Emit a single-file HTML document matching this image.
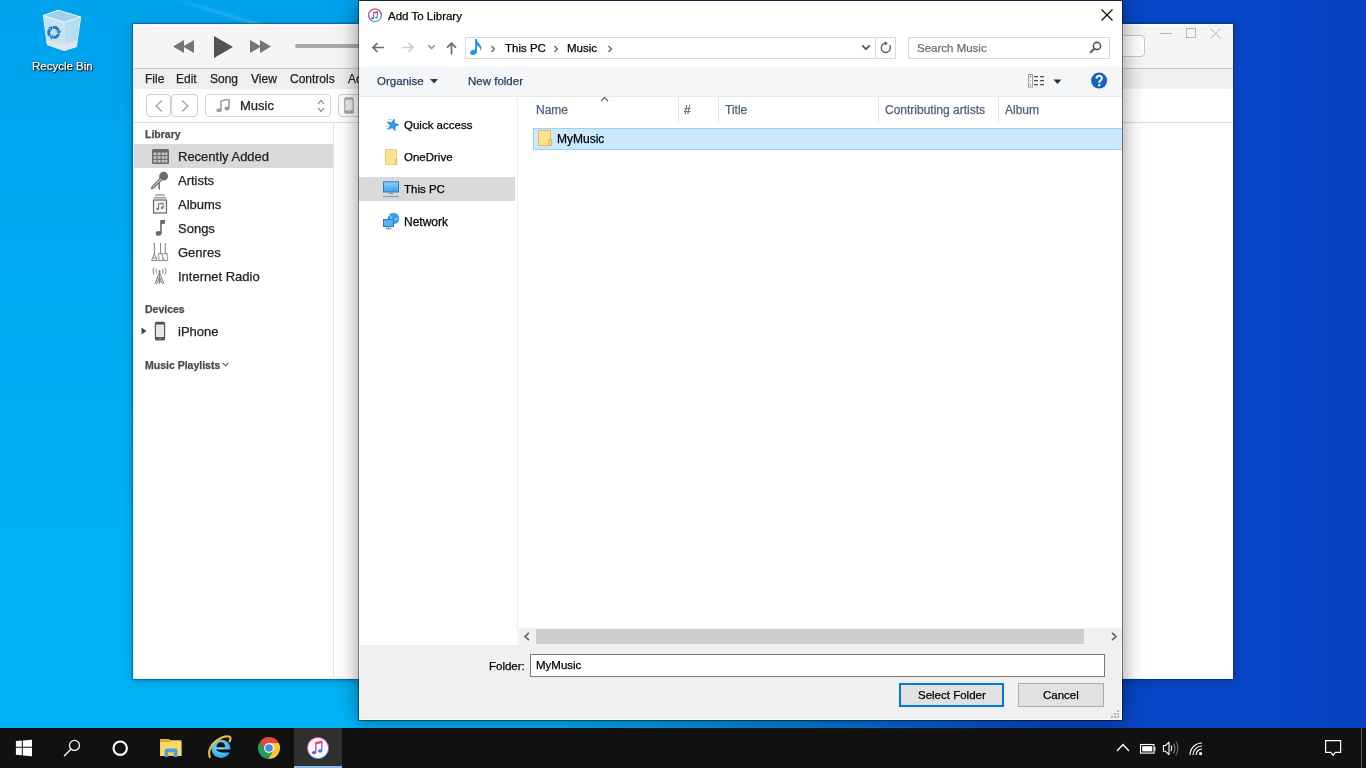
<!DOCTYPE html>
<html><head><meta charset="utf-8">
<style>
*{box-sizing:border-box;margin:0;padding:0}
html,body{width:1366px;height:768px;overflow:hidden;font-family:"Liberation Sans",sans-serif;}
body{position:relative;background:#0a4cc6;}
.a{position:absolute}
#bg{left:0;top:0;width:1366px;height:728px;background:linear-gradient(90deg,rgba(8,70,200,0) 0px,rgba(8,70,200,0) 560px,rgba(8,70,200,.5) 820px,rgba(8,70,200,1) 1060px,#0846c8 1250px,#0640c0 1366px),linear-gradient(180deg,#00a2ec 0px,#00a9f1 250px,#00b0f5 500px,#00b4f7 728px);}
.t{position:absolute;white-space:nowrap;line-height:1;will-change:transform;-webkit-text-stroke:0.25px currentColor}
/* itunes */
#it{left:133px;top:24px;width:1100px;height:655px;background:#fff;box-shadow:0 0 1px 1px rgba(0,40,80,.35),0 2px 10px rgba(0,0,0,.25);}
/* dialog */
#dlg{left:358px;top:0;width:765px;height:721px;background:transparent;border:1px solid rgba(0,0,0,.56);border-top-color:#132c45;box-shadow:0 1px 20px rgba(0,0,0,.42);}
#tb{left:0;top:728px;width:1366px;height:40px;background:#111;}
</style></head>
<body>
<div id="bg" class="a"></div>
<div class="a" style="left:150px;top:-10px;width:260px;height:3px;background:linear-gradient(90deg,rgba(255,255,255,0),rgba(160,230,255,.35) 50%,rgba(255,255,255,0));transform:rotate(17deg);transform-origin:0 0;filter:blur(1px)"></div>

<!-- Recycle bin -->
<svg class="a" style="left:40px;top:8px" width="45" height="46" viewBox="40 8 45 46">
<path d="M43.3 15.4 L58.2 10.2 L80.7 17 L76.5 46.7 L64.1 50.6 L47.2 44.7 Z" fill="#c6e2f2"/>
<path d="M64.1 22.3 L80.7 17 L76.5 46.7 L64.1 50.6 Z" fill="#b6dcf0"/>
<path d="M43.3 15.4 L58.2 10.2 L80.7 17 L64.1 22.3 Z" fill="#9fd0ec"/>
<path d="M45.9 40.5 L64.1 44 L77.3 40.8 L76.5 46.7 L64.1 50.6 L47.2 44.7 Z" fill="#dfe5e9"/>
<path d="M43.3 15.4 L58.2 10.2 L80.7 17 L64.1 22.3 Z" fill="none" stroke="#e4f6ff" stroke-width="1.1" stroke-linejoin="round"/>
<path d="M43.3 15.4 L47.2 44.7 L64.1 50.6 L76.5 46.7 L80.7 17" fill="none" stroke="#d6effc" stroke-width=".9"/>
<path d="M64.1 22.3 V50.6" stroke="#d8f0fc" stroke-width=".7"/>
<path d="M52.93 27.48 A5.0 5.0 0 0 1 58.44 30.53" fill="none" stroke="#1a78d2" stroke-width="2.8"/><path d="M59.49 34.10 L61.11 30.31 L56.11 31.74 Z" fill="#1a78d2"/><path d="M58.50 34.11 A5.0 5.0 0 0 1 53.10 37.35" fill="none" stroke="#1a78d2" stroke-width="2.8"/><path d="M49.49 36.48 L51.96 39.77 L53.22 34.73 Z" fill="#1a78d2"/><path d="M49.97 35.61 A5.0 5.0 0 0 1 49.86 29.32" fill="none" stroke="#1a78d2" stroke-width="2.8"/><path d="M52.43 26.62 L48.33 27.12 L52.07 30.73 Z" fill="#1a78d2"/>
</svg>
<div class="t" style="left:32px;top:61px;font-size:11.5px;color:#fff;text-shadow:0 0 1px #000,1px 1px 1px #000,0 1px 2px rgba(0,0,0,.8)">Recycle Bin</div>

<!-- iTunes window -->
<div id="it" class="a">
 <div class="a" style="left:0;top:0;width:1100px;height:44px;background:#f5f5f5;border-top:1px solid #f8feff"></div>
 <div class="a" style="left:0;top:44px;width:1100px;height:1px;background:#cbcbcb"></div>
 <div class="a" style="left:0;top:45px;width:1100px;height:20px;background:#efefef"></div>
 <div class="a" style="left:0;top:65px;width:1100px;height:33px;background:#fff"></div>
 <div class="a" style="left:0;top:98px;width:1100px;height:1px;background:#dedede"></div>
 <div class="a" style="left:200px;top:99px;width:1px;height:556px;background:#e3e3e3"></div>
 <!-- transport -->
 <svg class="a" style="left:40px;top:15.6px" width="22" height="14" viewBox="0 0 22 14"><path d="M0 6.5 L11 0 V13 Z M10 6.5 L21 0 V13 Z" fill="#757575"/></svg>
 <svg class="a" style="left:81px;top:12px" width="20" height="22" viewBox="0 0 20 22"><path d="M0 0 L19 11 L0 22 Z" fill="#525252"/></svg>
 <svg class="a" style="left:117px;top:15.6px" width="22" height="14" viewBox="0 0 22 14"><path d="M0 0 L11 6.5 L0 13 Z M10 0 L21 6.5 L10 13 Z" fill="#757575"/></svg>
 <div class="a" style="left:162px;top:20px;width:80px;height:4px;border-radius:2px;background:#a9a9a9"></div>
 <!-- search box -->
 <div class="a" style="left:900px;top:11px;width:112px;height:22px;border:1px solid #c9c9c9;border-radius:4px;background:#fff"></div>
 <!-- window controls -->
 <div class="a" style="left:1027px;top:9px;width:12px;height:1px;background:#b6b6b6"></div>
 <div class="a" style="left:1053px;top:4px;width:10px;height:10px;border:1px solid #b6b6b6"></div>
 <svg class="a" style="left:1077px;top:4px" width="11" height="11" viewBox="0 0 11 11"><path d="M0.5 0.5 L10.5 10.5 M10.5 0.5 L0.5 10.5" stroke="#b6b6b6" stroke-width="1"/></svg>
 <!-- menu -->
 <div class="t" style="left:12px;top:49px;font-size:12px;color:#222">File</div>
 <div class="t" style="left:43px;top:49px;font-size:12px;color:#222">Edit</div>
 <div class="t" style="left:77px;top:49px;font-size:12px;color:#222">Song</div>
 <div class="t" style="left:118px;top:49px;font-size:12px;color:#222">View</div>
 <div class="t" style="left:157px;top:49px;font-size:12px;color:#222">Controls</div>
 <div class="t" style="left:215px;top:49px;font-size:12px;color:#222">Account</div>
 <!-- nav -->
 <div class="a" style="left:13px;top:70px;width:25px;height:23px;border:1px solid #cfcfcf;border-radius:4px;background:#fff"></div>
 <div class="a" style="left:38px;top:70px;width:27px;height:23px;border:1px solid #cfcfcf;border-radius:4px;background:#fff"></div>
 <svg class="a" style="left:21px;top:76px" width="10" height="12" viewBox="0 0 10 12"><path d="M8 0.5 L2 6 L8 11.5" fill="none" stroke="#9a9a9a" stroke-width="1.1"/></svg>
 <svg class="a" style="left:47px;top:76px" width="10" height="12" viewBox="0 0 10 12"><path d="M2 0.5 L8 6 L2 11.5" fill="none" stroke="#9a9a9a" stroke-width="1.1"/></svg>
 <div class="a" style="left:72px;top:70px;width:126px;height:23px;border:1px solid #d6d6d6;border-radius:4px;background:#fff"></div>
 <svg class="a" style="left:83px;top:75px" width="14" height="14" viewBox="0 0 14 14"><path d="M5 11 V2 L13 0 V9" fill="none" stroke="#9d9d9d" stroke-width="1.6"/><ellipse cx="3" cy="11.3" rx="2.6" ry="2" fill="#9d9d9d"/><ellipse cx="11" cy="9.5" rx="2.6" ry="2" fill="#9d9d9d"/></svg>
 <div class="t" style="left:107px;top:75px;font-size:13px;color:#222">Music</div>
 <svg class="a" style="left:184px;top:75px" width="8" height="14" viewBox="0 0 8 14"><path d="M1 5 L4 1.5 L7 5 M1 9 L4 12.5 L7 9" fill="none" stroke="#777" stroke-width="1.1"/></svg>
 <div class="a" style="left:205px;top:70px;width:30px;height:23px;border:1px solid #cfcfcf;border-radius:4px;background:#fff"></div>
 <div class="a" style="left:0;top:0;width:1px;height:655px;background:#dcf8ff"></div>
 <div class="a" style="left:0;top:654px;width:1100px;height:1px;background:#e4f8ff"></div>
 <!-- sidebar -->
 <div class="t" style="left:12px;top:105px;font-size:10.5px;font-weight:bold;color:#4a4a4a">Library</div>
 <div class="a" style="left:1px;top:120px;width:199px;height:24px;background:#d9d9d9"></div>
 <div class="t" style="left:45px;top:126px;font-size:13px;color:#222">Recently Added</div>
 <div class="t" style="left:45px;top:150px;font-size:13px;color:#222">Artists</div>
 <div class="t" style="left:45px;top:174px;font-size:13px;color:#222">Albums</div>
 <div class="t" style="left:45px;top:198px;font-size:13px;color:#222">Songs</div>
 <div class="t" style="left:45px;top:222px;font-size:13px;color:#222">Genres</div>
 <div class="t" style="left:45px;top:246px;font-size:13px;color:#222">Internet Radio</div>
 <div class="t" style="left:12px;top:280px;font-size:10.5px;font-weight:bold;color:#4a4a4a">Devices</div>
 <div class="t" style="left:45px;top:301px;font-size:13px;color:#222">iPhone</div>
 <div class="t" style="left:12px;top:336px;font-size:10.5px;font-weight:bold;color:#4a4a4a">Music Playlists</div>
</div>


<!-- iTunes sidebar icons -->
<svg class="a" style="left:151px;top:148px" width="19" height="17" viewBox="0 0 19 17"><rect x="1" y="1" width="17" height="15" rx="1.5" fill="#6a6a6a"/><g fill="#c2c2c2"><rect x="2.5" y="4.5" width="3" height="2.6"/><rect x="6.5" y="4.5" width="3" height="2.6"/><rect x="10.5" y="4.5" width="3" height="2.6"/><rect x="14" y="4.5" width="2.5" height="2.6"/><rect x="2.5" y="8.2" width="3" height="2.6"/><rect x="6.5" y="8.2" width="3" height="2.6"/><rect x="10.5" y="8.2" width="3" height="2.6"/><rect x="14" y="8.2" width="2.5" height="2.6"/><rect x="2.5" y="11.9" width="3" height="2.6"/><rect x="6.5" y="11.9" width="3" height="2.6"/><rect x="10.5" y="11.9" width="3" height="2.6"/><rect x="14" y="11.9" width="2.5" height="2.6"/></g></svg>
<svg class="a" style="left:150px;top:171px" width="19" height="19" viewBox="0 0 19 19"><circle cx="13.6" cy="5.2" r="4.4" fill="#6a6a6a"/><path d="M10.2 7.2 L2.2 15.6 L1.4 17.8 L3.6 17 L11.8 8.8" fill="#cfcfcf" stroke="#6a6a6a" stroke-width="1.1" stroke-linejoin="round"/><path d="M9.2 12 V18.5" stroke="#6a6a6a" stroke-width="1.5"/></svg>
<svg class="a" style="left:152px;top:194px" width="16" height="20" viewBox="0 0 16 20"><path d="M3 1 H13 M2 3.8 H14" stroke="#6a6a6a" stroke-width="1"/><rect x="1.5" y="6" width="13" height="13" fill="#f0f0f0" stroke="#6a6a6a" stroke-width="1.2"/><path d="M6.5 15 V10 L11 9 V14" fill="none" stroke="#6a6a6a" stroke-width="1"/><ellipse cx="5.6" cy="15.1" rx="1.3" ry="1" fill="#6a6a6a"/><ellipse cx="10.1" cy="14.1" rx="1.3" ry="1" fill="#6a6a6a"/></svg>
<svg class="a" style="left:155px;top:219px" width="11" height="18" viewBox="0 0 11 18"><path d="M6 1 V14" stroke="#6a6a6a" stroke-width="1.6"/><path d="M6 1 H10 V4.5 L6 5.5 Z" fill="#6a6a6a"/><ellipse cx="3.6" cy="14.4" rx="2.9" ry="2.4" fill="#6a6a6a"/></svg>
<svg class="a" style="left:150px;top:242px" width="20" height="20" viewBox="150 242 20 20"><g fill="none" stroke="#777" stroke-width="0.9" stroke-linejoin="round"><path d="M154.4 243 V254 M153.4 244.5 L154.4 243 M151.6 260.5 L154.4 253.5 L157.2 260.5 Z M152.4 258 H156.4"/><path d="M160.5 243 V253.6 M165.3 243 V253.6"/><path d="M158.6 253.6 H162.4 V255.4 Q163.4 256.6 162.4 257.8 Q163.6 259.2 162.6 260.6 H158.6 Q159.6 259.2 158.6 257.8 Q159.6 256.6 158.6 255.4 Z"/><path d="M163.4 253.6 H167.2 V255.4 Q168.2 256.6 167.2 257.8 Q168.4 259.2 167.4 260.6 H163.4 Q164.4 259.2 163.4 257.8"/></g></svg>
<svg class="a" style="left:152px;top:267px" width="15" height="18" viewBox="0 0 15 18"><g fill="none" stroke="#7a7a7a" stroke-width="0.9"><path d="M7.5 5 L3 17 M7.5 5 L12 17 M7.5 3 V17 M5 11 H10 M4 14 L11 14 M5 11 L11 17 M10 11 L4 17"/><path d="M4.5 1.5 Q3 4 4.5 6.5 M10.5 1.5 Q12 4 10.5 6.5 M2 0.5 Q-0.2 4 2 7.5 M13 0.5 Q15.2 4 13 7.5"/></g><circle cx="7.5" cy="4" r="1" fill="#7a7a7a"/></svg>
<svg class="a" style="left:141px;top:327px" width="6" height="8" viewBox="0 0 6 8"><path d="M0.5 0.5 L5.5 4 L0.5 7.5 Z" fill="#444"/></svg>
<svg class="a" style="left:154px;top:321px" width="12" height="20" viewBox="0 0 12 20"><rect x="1.4" y="1.4" width="9.2" height="17.4" rx="1.6" fill="#e8e8e8" stroke="#555" stroke-width="1.2"/><rect x="1.4" y="1.4" width="9.2" height="2.2" fill="#555"/><rect x="1.4" y="16" width="9.2" height="2.8" fill="#555"/><circle cx="6" cy="17.4" r="0.7" fill="#ddd"/></svg>
<svg class="a" style="left:222px;top:362px" width="7" height="5" viewBox="0 0 7 5"><path d="M0.6 0.8 L3.5 3.8 L6.4 0.8" fill="none" stroke="#555" stroke-width="1.1"/></svg>
<!-- device button phone icon -->
<svg class="a" style="left:344px;top:97px" width="10" height="17" viewBox="0 0 10 17"><rect x="0.8" y="0.8" width="8.4" height="15.4" rx="1.3" fill="#e9e9e9" stroke="#a3a3a3" stroke-width="1.2"/><rect x="1" y="1" width="8" height="1.6" fill="#a3a3a3"/><rect x="1" y="13.4" width="8" height="2.6" fill="#a3a3a3"/><circle cx="5" cy="14.7" r=".6" fill="#eee"/></svg>

<!-- Dialog -->
<div id="dlg" class="a"></div>
<div class="a" style="left:359px;top:1px;width:763px;height:719px;background:#fff"></div>
<!-- title -->
<svg class="a" style="left:367px;top:7px" width="16" height="17" viewBox="0 0 16 17"><defs><linearGradient id="ig" x1="0.3" y1="0" x2="0.7" y2="1"><stop offset="0" stop-color="#d65a78"/><stop offset=".55" stop-color="#8a5cc0"/><stop offset="1" stop-color="#5ab8e0"/></linearGradient></defs><circle cx="8" cy="8.2" r="6.4" fill="#fdfbff" stroke="url(#ig)" stroke-width="1.3"/><path d="M6.6 11.2 V5.4 L10.4 4.6 V10.2" fill="none" stroke="url(#ig)" stroke-width="1.1"/><path d="M6.6 5.4 L10.4 4.6 V5.8 L6.6 6.6 Z" fill="#c85478"/><ellipse cx="5.6" cy="11.3" rx="1.3" ry="1" fill="#7a50b8"/><ellipse cx="9.4" cy="10.4" rx="1.3" ry="1" fill="#4a7ac8"/></svg>
<div class="t" style="left:388px;top:11px;font-size:11.5px;color:#000">Add To Library</div>
<svg class="a" style="left:1101px;top:9px" width="12" height="12" viewBox="0 0 12 12"><path d="M0.5 0.5 L11.5 11.5 M11.5 0.5 L0.5 11.5" stroke="#000" stroke-width="1.1"/></svg>
<!-- nav -->
<svg class="a" style="left:371px;top:41px" width="14" height="13" viewBox="0 0 14 13"><path d="M13 6.5 H2 M6.5 2 L2 6.5 L6.5 11" fill="none" stroke="#6a6a6a" stroke-width="1.7"/></svg>
<svg class="a" style="left:401px;top:41px" width="14" height="13" viewBox="0 0 14 13"><path d="M1 6.5 H12 M7.5 2 L12 6.5 L7.5 11" fill="none" stroke="#cdcdcd" stroke-width="1.7"/></svg>
<svg class="a" style="left:427px;top:44px" width="9" height="6" viewBox="0 0 9 6"><path d="M1.2 1.2 L4.5 4.5 L7.8 1.2" fill="none" stroke="#8a8a8a" stroke-width="1.4"/></svg>
<svg class="a" style="left:445px;top:41px" width="13" height="14" viewBox="0 0 13 14"><path d="M6.5 13.5 V2.2 M2 6.7 L6.5 2.2 L11 6.7" fill="none" stroke="#6a6a6a" stroke-width="1.7"/></svg>
<div class="a" style="left:465px;top:37px;width:431px;height:22px;border:1px solid #d9d9d9;background:#fff"></div>
<svg class="a" style="left:466px;top:36px" width="20" height="22" viewBox="466 36 20 22"><rect x="475.1" y="39" width="1.9" height="13.6" fill="#1a98e6"/><path d="M476.6 39.2 Q477.6 42.6 479.8 44.6 Q482 46.8 480.9 50.6 L480.4 50.4 Q480.6 47.6 478.4 46.2 L476.6 45 Z" fill="#1a98e6"/><ellipse cx="473.6" cy="52.4" rx="3.4" ry="2.4" transform="rotate(-18 473.6 52.4)" fill="#1a98e6"/></svg>
<svg class="a" style="left:490px;top:44px" width="6" height="10" viewBox="0 0 6 10"><path d="M1.5 2 L4.3 5 L1.5 8" fill="none" stroke="#707070" stroke-width="1.5"/></svg>
<div class="t" style="left:505px;top:43px;font-size:11.5px;color:#000">This PC</div>
<svg class="a" style="left:553px;top:44px" width="6" height="10" viewBox="0 0 6 10"><path d="M1.5 2 L4.3 5 L1.5 8" fill="none" stroke="#707070" stroke-width="1.5"/></svg>
<div class="t" style="left:567px;top:43px;font-size:11.5px;color:#000">Music</div>
<svg class="a" style="left:607px;top:44px" width="6" height="10" viewBox="0 0 6 10"><path d="M1.5 2 L4.3 5 L1.5 8" fill="none" stroke="#707070" stroke-width="1.5"/></svg>
<svg class="a" style="left:861px;top:44px" width="10" height="7" viewBox="0 0 10 7"><path d="M1.2 1.4 L5 5.2 L8.8 1.4" fill="none" stroke="#555" stroke-width="1.7"/></svg>
<div class="a" style="left:875px;top:38px;width:1px;height:20px;background:#d9d9d9"></div>
<svg class="a" style="left:880px;top:41px" width="12" height="13" viewBox="0 0 12 13"><path d="M9.6 4.2 A4.6 4.6 0 1 1 6 2.2" fill="none" stroke="#5a5a5a" stroke-width="1.3"/><path d="M4.6 0.2 L8 2.3 L4.8 4.6 Z" fill="#5a5a5a"/></svg>
<div class="a" style="left:908px;top:37px;width:202px;height:22px;border:1px solid #d9d9d9;background:#fff"></div>
<div class="t" style="left:917px;top:43px;font-size:11.5px;color:#6d6d6d">Search Music</div>
<svg class="a" style="left:1089px;top:41px" width="13" height="13" viewBox="0 0 13 13"><circle cx="8" cy="5" r="3.6" fill="none" stroke="#555" stroke-width="1.6"/><path d="M5.4 7.6 L1.2 11.8" stroke="#555" stroke-width="2"/></svg>
<!-- command bar -->
<div class="a" style="left:359px;top:66px;width:763px;height:30px;background:#f5f6f7"></div>
<div class="a" style="left:359px;top:96px;width:763px;height:1px;background:#e8eaec"></div>
<div class="t" style="left:377px;top:76px;font-size:11.5px;color:#1e3a5f">Organise</div>
<svg class="a" style="left:430px;top:79px" width="8" height="5" viewBox="0 0 8 5"><path d="M0 0 H8 L4 4.5 Z" fill="#1e3a5f"/></svg>
<div class="t" style="left:468px;top:76px;font-size:11.5px;color:#1e3a5f">New folder</div>
<svg class="a" style="left:1028px;top:74px" width="17" height="14" viewBox="0 0 17 14"><rect x="0.5" y="0.5" width="4" height="12.5" fill="#f6f6f6" stroke="#9a9a9a" stroke-width="1"/><rect x="2" y="2.2" width="1" height="1" fill="#333"/><rect x="2" y="6.2" width="1" height="1" fill="#5a8ab0"/><rect x="2" y="10.2" width="1" height="1" fill="#a03030"/><g fill="#555"><rect x="6" y="2" width="4" height="1.3"/><rect x="12" y="2" width="4" height="1.3"/><rect x="6" y="6" width="4" height="1.3"/><rect x="12" y="6" width="4" height="1.3"/><rect x="6" y="10" width="4" height="1.3"/><rect x="12" y="10" width="4" height="1.3"/></g></svg>
<svg class="a" style="left:1053px;top:79px" width="9" height="6" viewBox="0 0 9 6"><path d="M0.6 0.6 H8.4 L4.5 5 Z" fill="#1e3050"/></svg>
<svg class="a" style="left:1090px;top:72px" width="18" height="18" viewBox="0 0 18 18"><circle cx="9.1" cy="8.6" r="8" fill="#1464bf"/><path d="M6.5 6.6 Q6.6 3.8 9.2 3.8 Q11.9 3.9 11.9 6.3 Q11.9 7.7 10.3 8.7 Q9.2 9.4 9.2 10.9" fill="none" stroke="#e8f6ff" stroke-width="2"/><rect x="8.1" y="12.2" width="2.2" height="2" fill="#fff"/></svg>
<!-- nav pane -->
<div class="a" style="left:517px;top:97px;width:1px;height:548px;background:#f0f0f0"></div>
<div class="a" style="left:359px;top:177px;width:156px;height:24px;background:#d9d9d9"></div>
<div class="t" style="left:404px;top:120px;font-size:11.5px;color:#000">Quick access</div>
<div class="t" style="left:404px;top:152px;font-size:11.5px;color:#000">OneDrive</div>
<div class="t" style="left:404px;top:184px;font-size:11.5px;color:#000">This PC</div>
<div class="t" style="left:404px;top:216px;font-size:12px;color:#000">Network</div>

<!-- nav pane icons -->
<svg class="a" style="left:382px;top:116px" width="20" height="18" viewBox="382 116 20 18"><path d="M394.09 119.14 L394.73 123.46 L398.97 124.55 L395.05 126.50 L395.32 130.86 L392.26 127.74 L388.19 129.35 L390.21 125.47 L387.43 122.10 L391.74 122.82 Z" fill="#2b9ce9" stroke="#1a74c8" stroke-width=".6" stroke-linejoin="round"/><path d="M388.4 119.6 H391.6 M386.8 121.7 H389.6 M385.4 126.6 H388.4 M386 128.6 H388.6" stroke="#7cc0f0" stroke-width=".8"/></svg>
<svg class="a" style="left:384px;top:148px" width="15" height="18" viewBox="0 0 15 18"><path d="M1.5 1.5 H12.5 V16.5 H1.5 Z" fill="#fde38d" stroke="#e8ca72" stroke-width="0.9"/><path d="M11.2 11 H13 V16.5 H11.2 Z" fill="#f8d66c" stroke="#e2bf5c" stroke-width="0.7"/></svg>
<svg class="a" style="left:382px;top:181px" width="18" height="17" viewBox="0 0 18 17"><defs><linearGradient id="scr" x1="0" y1="0" x2="0" y2="1"><stop offset="0" stop-color="#8fd3fb"/><stop offset="1" stop-color="#3aa0ea"/></linearGradient></defs><rect x="1.5" y="0.8" width="15" height="10.2" fill="url(#scr)" stroke="#2a7ac4" stroke-width="1"/><path d="M7 12.5 H11" stroke="#7a8fa2" stroke-width="1"/><path d="M1 15.5 H17" stroke="#8a9db0" stroke-width="1.2"/></svg>
<svg class="a" style="left:382px;top:212px" width="18" height="18" viewBox="0 0 18 18"><circle cx="11.5" cy="6.5" r="5.8" fill="#3a9de6"/><path d="M7 3 Q11 5 9 8 Q13 9 16.5 6" fill="none" stroke="#a9daf8" stroke-width="1"/><rect x="1.5" y="7.5" width="10" height="7" fill="#56b2f0" stroke="#2a7ac4" stroke-width="1"/><path d="M6.5 14.5 V16.5 M3.5 16.8 H9.5" stroke="#6a8098" stroke-width="1"/></svg>


<!-- column headers -->
<div class="t" style="left:536px;top:104px;font-size:12px;color:#4c607a">Name</div>
<svg class="a" style="left:600px;top:96px" width="9" height="6" viewBox="0 0 9 6"><path d="M1 5 L4.5 1.5 L8 5" fill="none" stroke="#606060" stroke-width="1.1"/></svg>
<div class="a" style="left:678px;top:97px;width:1px;height:25px;background:#e5e5e5"></div>
<div class="t" style="left:684px;top:104px;font-size:12px;color:#4c607a">#</div>
<div class="a" style="left:718px;top:97px;width:1px;height:25px;background:#e5e5e5"></div>
<div class="t" style="left:725px;top:104px;font-size:12px;color:#4c607a">Title</div>
<div class="a" style="left:878px;top:97px;width:1px;height:25px;background:#e5e5e5"></div>
<div class="t" style="left:885px;top:104px;font-size:12px;color:#4c607a">Contributing artists</div>
<div class="a" style="left:998px;top:97px;width:1px;height:25px;background:#e5e5e5"></div>
<div class="t" style="left:1005px;top:104px;font-size:12px;color:#4c607a">Album</div>
<!-- selected row -->
<div class="a" style="left:533px;top:128px;width:589px;height:22px;background:#cce8ff;border:1px solid #99d1ff;border-right:none"></div>
<!-- file folder icon -->
<svg class="a" style="left:537px;top:129px" width="16" height="18" viewBox="0 0 16 18"><path d="M1.5 1.5 H13.5 V16.5 H1.5 Z" fill="#fde38d" stroke="#dfbd5e" stroke-width="1"/><path d="M11.5 10.5 H14.5 V16.5 H11.5 Z" fill="#f8d56a" stroke="#d9b450" stroke-width="0.8"/></svg>
<div class="t" style="left:557px;top:133px;font-size:12px;color:#000">MyMusic</div>
<!-- h scrollbar -->
<div class="a" style="left:519px;top:628px;width:603px;height:17px;background:#f0f0f0"></div>
<div class="a" style="left:536px;top:629px;width:548px;height:15px;background:#cdcdcd"></div>
<svg class="a" style="left:523px;top:632px" width="8" height="9" viewBox="0 0 8 9"><path d="M6 0.8 L2 4.5 L6 8.2" fill="none" stroke="#606060" stroke-width="1.6"/></svg>
<svg class="a" style="left:1110px;top:632px" width="8" height="9" viewBox="0 0 8 9"><path d="M2 0.8 L6 4.5 L2 8.2" fill="none" stroke="#606060" stroke-width="1.6"/></svg>
<!-- bottom panel -->
<div class="a" style="left:359px;top:645px;width:763px;height:75px;background:#f0f0f0;border-right:1px solid #fbfbfb;border-bottom:1px solid #fbfbfb;border-left:1px solid #fbfbfb"></div>
<div class="t" style="left:489px;top:661px;font-size:11.5px;color:#000">Folder:</div>
<div class="a" style="left:530px;top:654px;width:575px;height:23px;background:#fff;border:1px solid #7a7a7a"></div>
<div class="t" style="left:536px;top:660px;font-size:11.5px;color:#000">MyMusic</div>
<div class="a" style="left:899px;top:683px;width:105px;height:24px;background:#e1e1e1;border:2px solid #0078d7"></div>
<div class="t" style="left:918px;top:690px;font-size:11.5px;color:#000">Select Folder</div>
<div class="a" style="left:1018px;top:683px;width:86px;height:24px;background:#e1e1e1;border:1px solid #adadad"></div>
<div class="t" style="left:1043px;top:690px;font-size:11.5px;color:#000">Cancel</div>
<svg class="a" style="left:1111px;top:710px" width="9" height="9" viewBox="0 0 9 9"><g fill="#b8b8b8"><rect x="6" y="0" width="2" height="2"/><rect x="3" y="3" width="2" height="2"/><rect x="6" y="3" width="2" height="2"/><rect x="0" y="6" width="2" height="2"/><rect x="3" y="6" width="2" height="2"/><rect x="6" y="6" width="2" height="2"/></g></svg>

<!-- Taskbar -->
<div id="tb" class="a"></div>
<!-- start -->
<svg class="a" style="left:14px;top:738px" width="20" height="20" viewBox="14 738 20 20"><path d="M15.9 741 L21.8 740.5 V746.7 H15.9 Z M22.8 740.4 L32 739.7 V746.7 H22.8 Z M15.9 747.8 H21.8 V755.3 L15.9 754.8 Z M22.8 747.8 H32 V756.3 L22.8 755.4 Z" fill="#fff"/></svg>
<!-- search -->
<svg class="a" style="left:62px;top:738px" width="20" height="20" viewBox="62 738 20 20"><circle cx="74.5" cy="745.4" r="5" fill="none" stroke="#fff" stroke-width="1.25"/><path d="M70.8 749.2 L64.4 755.8" stroke="#fff" stroke-width="1.3" stroke-linecap="round"/></svg>
<!-- cortana -->
<svg class="a" style="left:112px;top:740px" width="17" height="17" viewBox="0 0 17 17"><circle cx="8.2" cy="8.2" r="6.7" fill="none" stroke="#fff" stroke-width="2.1"/></svg>
<!-- explorer -->
<svg class="a" style="left:158px;top:736px" width="26" height="24" viewBox="158 736 26 24"><path d="M160.2 739 H169 L170.2 740.2 H181.4 V756 H160.2 Z" fill="#f8cf5a"/><path d="M160.2 741.8 H181.4 V756 H160.2 Z" fill="#fdd866"/><path d="M160.2 739.6 H168.6 L169.6 740.6 V742 H160.2 Z" fill="#e0a422"/><path d="M164.6 750.4 Q164.6 748.6 166.4 748.6 H175.6 Q177.4 748.6 177.4 750.4 V757 H173.8 V752.4 H168.2 V757 H164.6 Z" fill="#4a9de0"/><rect x="168.2" y="752.4" width="5.6" height="3.6" fill="#f2c649"/></svg>
<!-- IE -->
<svg class="a" style="left:200px;top:730px" width="40" height="34" viewBox="200 730 40 34"><defs><radialGradient id="ieg" cx=".45" cy=".4" r=".6"><stop offset="0" stop-color="#8fe4ff"/><stop offset="1" stop-color="#2aa6e6"/></radialGradient></defs><ellipse cx="221" cy="748.8" rx="9.6" ry="9.2" fill="url(#ieg)"/><path d="M216.4 747.2 Q216.8 742.2 220.9 742.2 Q225 742.2 225.3 747.2 Z" fill="#0b0f14"/><path d="M215.8 749.6 H231.5 V752.4 H222.5 Q218 752.4 215.8 749.6 Z" fill="#0b0f14"/><path d="M209.8 757 Q207.5 751.5 212.2 744.8 Q217.6 738.6 225 736.6 Q229.6 735.6 230.4 737.6 Q230.8 739.6 229.6 741.4" fill="none" stroke="#e9c13a" stroke-width="2.1" stroke-linecap="round"/></svg>
<!-- chrome -->
<svg class="a" style="left:257px;top:736px" width="24" height="24" viewBox="0 0 24 24"><path d="M21.85 7.10 A11.0 11.0 0 0 0 2.83 5.92 L7.76 14.45 L12.0 12.0 L12.00 7.10 Z" fill="#de4b3a"/><path d="M2.83 5.92 A11.0 11.0 0 0 0 11.32 22.98 L16.24 14.45 L12.0 12.0 L7.76 14.45 Z" fill="#1ea05a"/><path d="M11.32 22.98 A11.0 11.0 0 0 0 21.85 7.10 L12.00 7.10 L12.0 12.0 L16.24 14.45 Z" fill="#fcc934"/><circle cx="12.0" cy="12.0" r="4.9" fill="#fff"/><circle cx="12.0" cy="12.0" r="3.8" fill="#4a88f0"/></svg>
<!-- itunes active -->
<div class="a" style="left:294px;top:728px;width:48px;height:40px;background:#2f2f2f"></div>
<div class="a" style="left:294px;top:766px;width:48px;height:2px;background:#8bbbe8"></div>
<svg class="a" style="left:306px;top:736px" width="24" height="24" viewBox="0 0 24 24"><defs><linearGradient id="ig2" x1="0.3" y1="0" x2="0.7" y2="1"><stop offset="0" stop-color="#e8405a"/><stop offset=".5" stop-color="#9a4ad8"/><stop offset="1" stop-color="#3aa8f0"/></linearGradient><linearGradient id="ng" x1="0" y1="0" x2="0.3" y2="1"><stop offset="0" stop-color="#f0506a"/><stop offset=".6" stop-color="#8a50d8"/><stop offset="1" stop-color="#5a6ee0"/></linearGradient></defs><circle cx="12" cy="12" r="10.6" fill="#fbf8fd" stroke="url(#ig2)" stroke-width="1"/><path d="M9.8 16.3 V6.6 L15.8 5.4 V14.6" fill="none" stroke="url(#ng)" stroke-width="1.3"/><path d="M9.8 6.6 L15.8 5.4 V7.2 L9.8 8.4 Z" fill="#ea4a64"/><ellipse cx="8.1" cy="16.6" rx="2.2" ry="1.7" fill="#7a48d8"/><ellipse cx="14.1" cy="14.9" rx="2.2" ry="1.7" fill="#4a78e0"/></svg>
<!-- tray -->
<svg class="a" style="left:1116px;top:743px" width="14" height="9" viewBox="0 0 14 9"><path d="M1 8 L7 1.5 L13 8" fill="none" stroke="#fff" stroke-width="1.3"/></svg>
<svg class="a" style="left:1138px;top:742px" width="20" height="14" viewBox="1138 742 20 14"><rect x="1140.5" y="744.5" width="13.5" height="8.6" fill="none" stroke="#fff" stroke-width="1.1"/><rect x="1142.2" y="746.2" width="10.1" height="5.2" fill="#fff"/><rect x="1154.4" y="747" width="1.1" height="3.6" fill="#fff"/></svg>
<svg class="a" style="left:1160px;top:740px" width="22" height="17" viewBox="1160 740 22 17"><path d="M1163.4 745.5 H1165.6 L1169 742.2 V754.6 L1165.6 751.3 H1163.4 Z" fill="none" stroke="#fff" stroke-width="1.1" stroke-linejoin="round"/><path d="M1171 745.6 Q1172.6 748.4 1171 751.2" fill="none" stroke="#fff" stroke-width="1.1"/><path d="M1173.4 743.6 Q1176.4 748.4 1173.4 753.2" fill="none" stroke="#8a8a8a" stroke-width="1.1"/><path d="M1175.8 741.4 Q1180 748.4 1175.8 755.4" fill="none" stroke="#6a6a6a" stroke-width="1.1"/></svg>
<svg class="a" style="left:1189px;top:742px" width="15" height="14" viewBox="0 0 15 14"><g fill="none" stroke="#fff" stroke-width="1.2"><path d="M1 13 A12 12 0 0 1 13 1"/><path d="M4 13 A9 9 0 0 1 13 4"/><path d="M7 13 A6 6 0 0 1 13 7"/></g><circle cx="11.6" cy="11.6" r="1.6" fill="#fff"/></svg>
<svg class="a" style="left:1322px;top:737px" width="22" height="22" viewBox="1322 737 22 22"><path d="M1325.6 740.6 H1340.6 V752.4 H1335.4 L1333.1 755.2 L1330.8 752.4 H1325.6 Z" fill="none" stroke="#fff" stroke-width="1.2"/></svg>
<div class="a" style="left:1361px;top:728px;width:1px;height:40px;background:#5a5a5a"></div>
</body></html>
